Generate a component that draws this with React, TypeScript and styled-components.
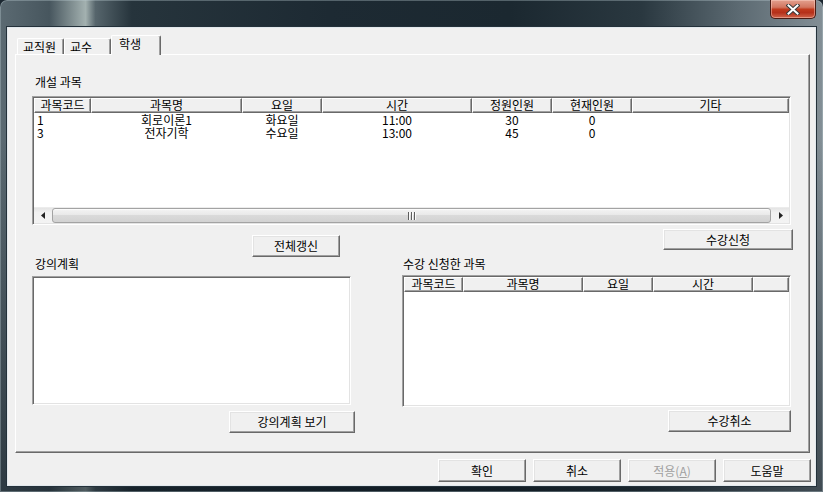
import styled, { createGlobalStyle } from "styled-components";

const colors = {
  face: "#f0f0f0",
  light: "#ffffff",
  lightEdge: "#e3e3e3",
  shadow: "#a0a0a0",
  darkShadow: "#696969",
  disabled: "#a0a0a0",
};

const GlobalStyle = createGlobalStyle`
  * { box-sizing: border-box; }
  html, body { margin: 0; padding: 0; background: #1b2730; }
  body {
    font-family: "Noto Sans CJK KR", "Noto Sans", sans-serif;
    font-size: 12px;
    color: #000;
  }
`;

const Window = styled.div`
  width: 823px;
  height: 492px;
  display: flex;
  flex-direction: column;
  overflow: hidden;
  border-radius: 7px 7px 0 0;
  background:
    linear-gradient(180deg, rgba(0, 0, 0, 0) 0px, rgba(0, 0, 0, 0) 140px, rgba(10, 20, 28, 0.55) 100%),
    linear-gradient(
      90deg,
      #5b6a72 0%,
      #47565e 6%,
      #a3b1b0 10.4%,
      #56656c 11.6%,
      #26343c 16%,
      #1d2a33 40%,
      #1b2830 62%,
      #2a3840 78%,
      #5d6b73 90%,
      #838f96 100%
    );
  box-shadow: inset 0 0 0 1px rgba(190, 205, 212, 0.35);
`;

const TitleBar = styled.div`
  height: 27px;
  display: flex;
  justify-content: flex-end;
  align-items: flex-start;
  padding-right: 7px;
`;

const CloseButton = styled.div`
  width: 46px;
  height: 19px;
  display: flex;
  align-items: center;
  justify-content: center;
  border: 1px solid #4a1c14;
  border-top: none;
  border-radius: 0 0 5px 5px;
  background: linear-gradient(
    180deg,
    #e3a08e 0%,
    #d27660 40%,
    #c03a1d 52%,
    #b5301a 70%,
    #d0644a 100%
  );
  box-shadow: inset 0 0 0 1px rgba(255, 215, 205, 0.45);
`;

const Frame = styled.div`
  flex: 1;
  display: flex;
  padding: 0 7px 6px 7px;
`;

const Client = styled.div`
  flex: 1;
  display: flex;
  flex-direction: column;
  background: ${colors.face};
  border: 1px solid #e2e8ec;
  box-shadow: 0 0 0 1px #24313a;
`;

const TabControl = styled.div`
  margin: 7px 0 0 7px;
  width: 795px;
  display: flex;
  flex-direction: column;
`;

const TabStrip = styled.div`
  height: 19px;
  display: flex;
  align-items: flex-end;
  padding-left: 2px;
`;

const Tab = styled.div<{ $active?: boolean; $w: number }>`
  width: ${(p) => p.$w}px;
  height: ${(p) => (p.$active ? 20 : 16)}px;
  margin-bottom: ${(p) => (p.$active ? -1 : 0)}px;
  position: relative;
  z-index: ${(p) => (p.$active ? 1 : 0)};
  padding: ${(p) => (p.$active ? "1px 0 0 7px" : "1px 0 0 5px")};
  line-height: 14px;
  white-space: nowrap;
  background: ${colors.face};
  border-top: 1px solid ${colors.light};
  border-left: 1px solid ${colors.light};
  border-right: 1px solid ${colors.darkShadow};
  box-shadow: inset -1px 0 0 ${colors.shadow};
  border-radius: 2px 2px 0 0;
`;

const TabPage = styled.div`
  height: 399px;
  display: flex;
  flex-direction: column;
  padding: 20px 0 0 16px;
  border-top: 1px solid ${colors.light};
  border-left: 1px solid ${colors.light};
  border-right: 1px solid ${colors.darkShadow};
  border-bottom: 1px solid ${colors.darkShadow};
  box-shadow: inset -1px -1px 0 ${colors.shadow};
`;

const Label = styled.div<{ $indent?: number; $gap?: number }>`
  height: 14px;
  line-height: 14px;
  padding-left: ${(p) => p.$indent ?? 3}px;
  margin-bottom: ${(p) => p.$gap ?? 0}px;
  white-space: nowrap;
`;

const sunken = `
  border: 1px solid;
  border-color: ${colors.shadow} ${colors.light} ${colors.light} ${colors.shadow};
  box-shadow: inset 1px 1px 0 ${colors.darkShadow}, inset -1px -1px 0 ${colors.lightEdge};
  padding: 1px;
`;

const ListView = styled.div<{ $w: number; $h: number }>`
  width: ${(p) => p.$w}px;
  height: ${(p) => p.$h}px;
  display: flex;
  flex-direction: column;
  background: #fff;
  ${sunken}
`;

const HeaderRow = styled.div<{ $cols: string }>`
  display: grid;
  grid-template-columns: ${(p) => p.$cols};
  height: 15px;
`;

const HeaderCell = styled.div`
  background: ${colors.face};
  border-top: 1px solid ${colors.light};
  border-left: 1px solid ${colors.light};
  border-right: 1px solid ${colors.darkShadow};
  border-bottom: 1px solid ${colors.darkShadow};
  box-shadow: inset -1px -1px 0 ${colors.shadow};
  text-align: center;
  line-height: 12px;
  white-space: nowrap;
`;

const ListBody = styled.div`
  flex: 1;
`;

const Row = styled.div<{ $cols: string }>`
  display: grid;
  grid-template-columns: ${(p) => p.$cols};
  height: 13px;
  line-height: 13px;
`;

const Cell = styled.div<{ $align: string }>`
  text-align: ${(p) => p.$align};
  padding: 0 3px;
  white-space: nowrap;
`;

const HScroll = styled.div`
  height: 16px;
  display: flex;
  background: linear-gradient(180deg, #e4e4e4 0%, #f1f1f1 30%, #f3f3f3 100%);
  border-top: 1px solid #ececec;
`;

const ScrollArrow = styled.div`
  width: 17px;
  display: flex;
  align-items: center;
  justify-content: center;
`;

const ScrollTrack = styled.div`
  flex: 1;
  display: flex;
  padding: 0 1px;
`;

const Thumb = styled.div`
  flex: 1;
  display: flex;
  align-items: center;
  justify-content: center;
  border: 1px solid #a3a3a3;
  border-radius: 3px;
  background: linear-gradient(180deg, #f4f4f4 0%, #e9e9e9 45%, #dadada 50%, #d2d2d2 100%);
  box-shadow: inset 0 1px 0 #fbfbfb;
`;

const Lower = styled.div`
  display: flex;
  gap: 47px;
`;

const Column = styled.div<{ $w: number }>`
  width: ${(p) => p.$w}px;
  display: flex;
  flex-direction: column;
`;

const Memo = styled.textarea`
  width: 319px;
  height: 129px;
  margin-top: 5px;
  resize: none;
  outline: none;
  background: #fff;
  font: inherit;
  ${sunken}
`;

const Button = styled.button<{ $w: number; $h?: number }>`
  width: ${(p) => p.$w}px;
  height: ${(p) => p.$h ?? 22}px;
  padding: 0;
  font: inherit;
  color: ${(p) => (p.disabled ? colors.disabled : "#000")};
  background: ${colors.face};
  border: 1px solid;
  border-color: ${colors.light} ${colors.darkShadow} ${colors.darkShadow} ${colors.light};
  box-shadow: inset -1px -1px 0 ${colors.shadow}, inset 1px 1px 0 ${colors.lightEdge};
  line-height: 14px;
  white-space: nowrap;
`;

const ButtonBar = styled.div`
  display: flex;
  justify-content: flex-end;
  gap: 7px;
  margin-top: 6px;
  padding-right: 4px;
`;

type Col = { title: string; w: string; align: string };

const openCols: Col[] = [
  { title: "과목코드", w: "57px", align: "left" },
  { title: "과목명", w: "151px", align: "center" },
  { title: "요일", w: "80px", align: "center" },
  { title: "시간", w: "150px", align: "center" },
  { title: "정원인원", w: "80px", align: "center" },
  { title: "현재인원", w: "80px", align: "center" },
  { title: "기타", w: "1fr", align: "center" },
];

const takenCols: Col[] = [
  { title: "과목코드", w: "59px", align: "left" },
  { title: "과목명", w: "120px", align: "center" },
  { title: "요일", w: "70px", align: "center" },
  { title: "시간", w: "100px", align: "center" },
  { title: "", w: "1fr", align: "center" },
];

const openRows = [
  ["1", "회로이론1", "화요일", "11:00", "30", "0", ""],
  ["3", "전자기학", "수요일", "13:00", "45", "0", ""],
];

const template = (cols: Col[]) => cols.map((c) => c.w).join(" ");

const CloseGlyph = () => (
  <svg width="14" height="11" viewBox="0 0 14 11">
    <path d="M2.5 1.5 L11.5 9.5 M11.5 1.5 L2.5 9.5" stroke="#3b3b3b" strokeWidth="4" strokeLinecap="square" />
    <path d="M2.5 1.5 L11.5 9.5 M11.5 1.5 L2.5 9.5" stroke="#ffffff" strokeWidth="2" strokeLinecap="square" />
  </svg>
);

const Arrow = ({ dir }: { dir: "left" | "right" }) => (
  <svg width="4" height="7" viewBox="0 0 4 7">
    <path d={dir === "left" ? "M4 0 L0 3.5 L4 7 Z" : "M0 0 L4 3.5 L0 7 Z"} fill="#222" />
  </svg>
);

const Grip = () => (
  <svg width="8" height="8" viewBox="0 0 8 8">
    {[0, 3, 6].map((x) => (
      <g key={x}>
        <rect x={x} y={0} width={1} height={8} fill="#5e5e5e" />
        <rect x={x + 1} y={0} width={1} height={8} fill="#fafafa" />
      </g>
    ))}
  </svg>
);

const Grid = ({
  cols,
  rows,
  w,
  h,
  scroll,
}: {
  cols: Col[];
  rows: string[][];
  w: number;
  h: number;
  scroll?: boolean;
}) => {
  const tpl = template(cols);
  return (
    <ListView $w={w} $h={h}>
      <HeaderRow $cols={tpl}>
        {cols.map((c, i) => (
          <HeaderCell key={i}>{c.title}</HeaderCell>
        ))}
      </HeaderRow>
      <ListBody>
        {rows.map((r, i) => (
          <Row key={i} $cols={tpl}>
            {r.map((v, j) => (
              <Cell key={j} $align={cols[j].align}>
                {v}
              </Cell>
            ))}
          </Row>
        ))}
      </ListBody>
      {scroll && (
        <HScroll>
          <ScrollArrow>
            <Arrow dir="left" />
          </ScrollArrow>
          <ScrollTrack>
            <Thumb>
              <Grip />
            </Thumb>
          </ScrollTrack>
          <ScrollArrow>
            <Arrow dir="right" />
          </ScrollArrow>
        </HScroll>
      )}
    </ListView>
  );
};

const App = () => {
  return (
    <>
      <GlobalStyle />
      <Window>
        <TitleBar>
          <CloseButton>
            <CloseGlyph />
          </CloseButton>
        </TitleBar>
        <Frame>
          <Client>
            <TabControl>
              <TabStrip>
                <Tab $w={47}>교직원</Tab>
                <Tab $w={47}>교수</Tab>
                <Tab $w={50} $active>
                  학생
                </Tab>
              </TabStrip>
              <TabPage>
                <Label $gap={7}>개설 과목</Label>
                <Grid cols={openCols} rows={openRows} w={759} h={129} scroll />
                <Lower>
                  <Column $w={323}>
                    <Button $w={88} style={{ marginTop: 10, marginLeft: 220 }}>
                      전체갱신
                    </Button>
                    <Label>강의계획</Label>
                    <Memo readOnly />
                    <Button $w={126} style={{ marginTop: 6, marginLeft: 197 }}>
                      강의계획 보기
                    </Button>
                  </Column>
                  <Column $w={392}>
                    <Button $w={130} $h={21} style={{ marginTop: 4, alignSelf: "flex-end", marginRight: 1 }}>
                      수강신청
                    </Button>
                    <Label $indent={1} $gap={4} style={{ marginTop: 7 }}>
                      수강 신청한 과목
                    </Label>
                    <Grid cols={takenCols} rows={[]} w={389} h={132} />
                    <Button $w={123} style={{ marginTop: 3, alignSelf: "flex-end", marginRight: 3 }}>
                      수강취소
                    </Button>
                  </Column>
                </Lower>
              </TabPage>
            </TabControl>
            <ButtonBar>
              <Button $w={88} $h={23}>확인</Button>
              <Button $w={88} $h={23}>취소</Button>
              <Button $w={88} $h={23} disabled>
                적용(<u>A</u>)
              </Button>
              <Button $w={88} $h={23}>도움말</Button>
            </ButtonBar>
          </Client>
        </Frame>
      </Window>
    </>
  );
};

export default App;
